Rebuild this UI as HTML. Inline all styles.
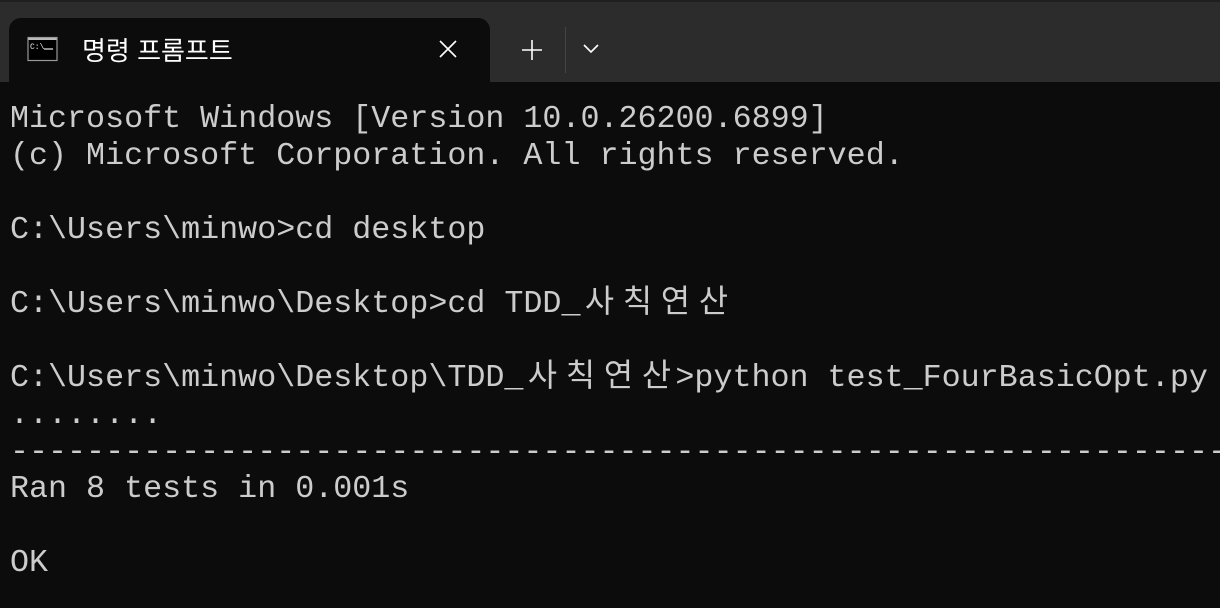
<!DOCTYPE html>
<html><head><meta charset="utf-8"><style>
html,body{margin:0;padding:0;width:1220px;height:608px;overflow:hidden;background:#0c0c0c}
.bar{position:absolute;left:0;top:0;width:1220px;height:82px;background:#2c2c2c}
.top{position:absolute;left:0;top:0;width:1220px;height:2px;background:#1f1f1f}
.tab{position:absolute;left:9px;top:18px;width:481px;height:64px;background:#0c0c0c;border-radius:12px 12px 0 0}
.title{position:absolute;left:82px;top:31px;color:#fff;font:26px "Liberation Sans","Noto Sans CJK KR",sans-serif}
.term{position:absolute;left:10px;top:101px;width:1210px;overflow:hidden;color:#cccccc;font-family:"Liberation Mono","Noto Sans CJK KR",monospace;font-size:31.7px;line-height:37px;white-space:pre}
.k{display:inline-block;width:38px;text-align:center}
</style></head><body>
<div class="bar"></div><div class="top"></div>
<div class="tab"></div>
<svg style="position:absolute;left:27px;top:36px" width="32" height="27" viewBox="0 0 32 27">
<rect x="1" y="1.5" width="29" height="23" fill="#000" stroke="#999" stroke-width="1.2"/>
<rect x="1.5" y="2" width="28" height="2" fill="#bbb"/>
<text x="3" y="13" fill="#eee" font-family="Liberation Mono" font-size="8">C:\</text>
<line x1="17" y1="13" x2="26" y2="13" stroke="#eee" stroke-width="1.2"/>
</svg>
<div class="title">명령 프롬프트</div>
<svg style="position:absolute;left:437px;top:38px" width="22" height="22" viewBox="0 0 22 22"><path d="M3 3L19 19M19 3L3 19" stroke="#fff" stroke-width="1.6"/></svg>
<svg style="position:absolute;left:520px;top:38px" width="24" height="24" viewBox="0 0 24 24"><path d="M12 2V22M2 12H22" stroke="#fff" stroke-width="1.6"/></svg>
<div style="position:absolute;left:565px;top:27px;width:1px;height:46px;background:#444"></div>
<svg style="position:absolute;left:582px;top:42px" width="18" height="14" viewBox="0 0 18 14"><path d="M2 3L9 10L16 3" stroke="#fff" stroke-width="1.6" fill="none"/></svg>
<div class="term">Microsoft Windows [Version 10.0.26200.6899]
(c) Microsoft Corporation. All rights reserved.

C:\Users\minwo>cd desktop

C:\Users\minwo\Desktop>cd TDD_<span class="k">사</span><span class="k">칙</span><span class="k">연</span><span class="k">산</span>

C:\Users\minwo\Desktop\TDD_<span class="k">사</span><span class="k">칙</span><span class="k">연</span><span class="k">산</span>>python test_FourBasicOpt.py
........
----------------------------------------------------------------------
Ran 8 tests in 0.001s

OK</div>
</body></html>
